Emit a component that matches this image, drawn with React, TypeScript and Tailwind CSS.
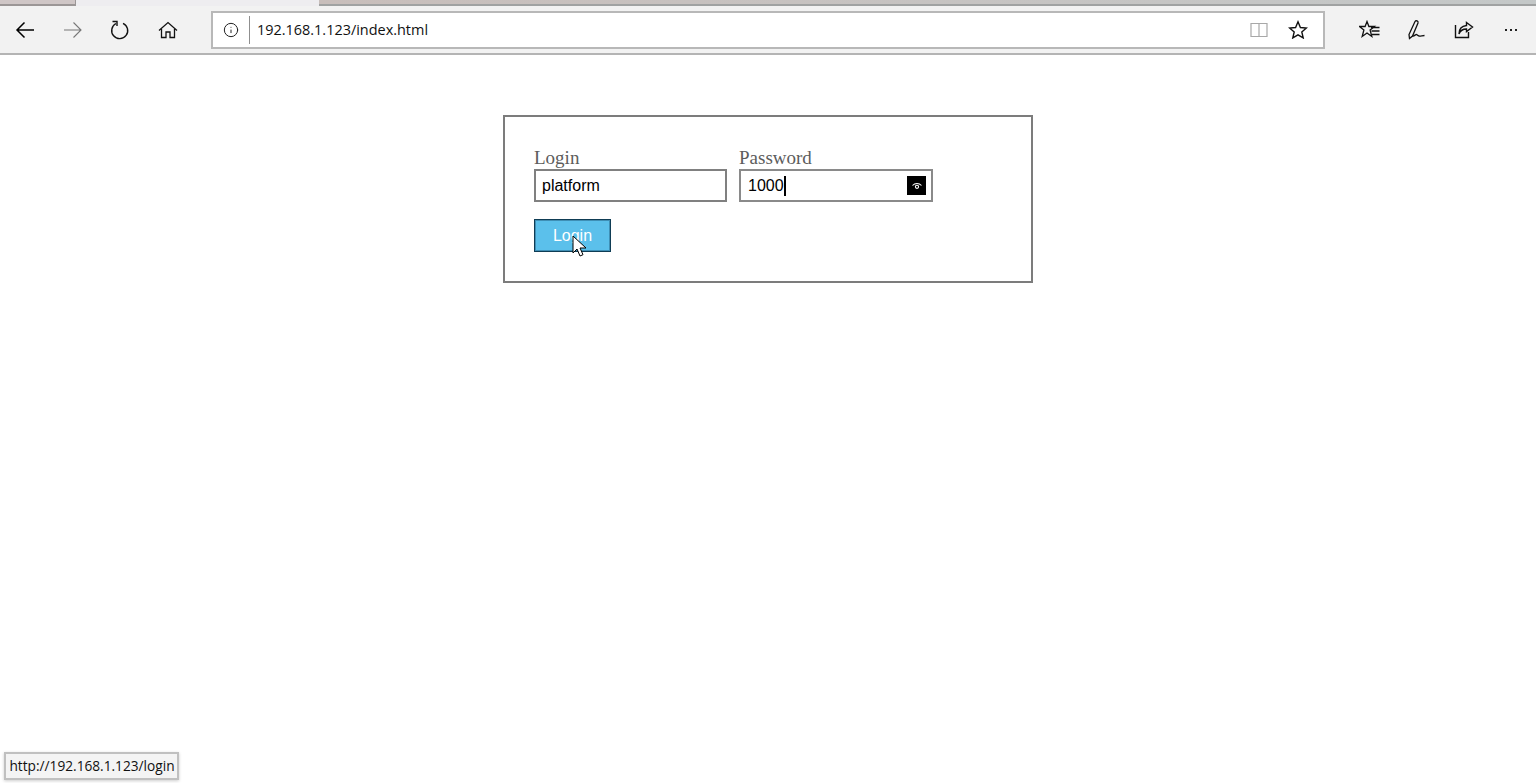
import { Info } from "lucide-react";

function BackIcon({ color }: { color: string }) {
  return (
    <svg width="20" height="18" viewBox="0 0 20 18" fill="none" stroke={color} strokeWidth="1.500">
      <path d="M19 9H2M9.500 1.500L2 9l7.500 7.500" />
    </svg>
  );
}

function ForwardIcon({ color }: { color: string }) {
  return (
    <svg width="20" height="18" viewBox="0 0 20 18" fill="none" stroke={color} strokeWidth="1.100">
      <path d="M1 9h17M10.500 1.500L18 9l-7.500 7.500" />
    </svg>
  );
}

function ReloadIcon() {
  return (
    <svg width="20" height="20" viewBox="0 0 20 20" fill="none" stroke="#111" strokeWidth="1.400">
      <path d="M13 3.300a8 8 0 1 1-7 .2" />
      <path d="M2.500 1.500h4.500v4.500" />
    </svg>
  );
}

function HomeIcon() {
  return (
    <svg width="20" height="18" viewBox="0 0 20 18" fill="none" stroke="#111" strokeWidth="1.300">
      <path d="M1 9.500L10 1.500l9 8" />
      <path d="M3.500 8v8.500h4.500V11h4v5.500h4.500V8" />
    </svg>
  );
}

function BookIcon() {
  return (
    <svg width="18" height="16" viewBox="0 0 18 16" fill="none" stroke="#a8a8a8" strokeWidth="1.200">
      <path d="M1 1.500h16v13H1z" />
      <path d="M9 1.500v13" />
    </svg>
  );
}

function StarIcon() {
  return (
    <svg width="20" height="19" viewBox="0 0 20 19" fill="none" stroke="#111" strokeWidth="1.400">
      <path d="M10 1.800l2.400 5.700 6 .5-4.600 4 1.400 5.900L10 14.800l-5.200 3.100 1.400-5.900-4.600-4 6-.5z" />
    </svg>
  );
}

function FavoritesIcon() {
  return (
    <svg width="21" height="19" viewBox="0 0 21 19" fill="none" stroke="#111" strokeWidth="1.300">
      <path d="M8 1.500l1.900 5h5.600l-4.400 3.500 1.700 6.500L8 13l-4.800 3.500 1.700-6.500L.5 6.500h5.600z" />
      <path d="M12 7.500h8.500M12.500 11h8M13 14.500h7.500" strokeWidth="1.600" />
    </svg>
  );
}

function PenIcon() {
  return (
    <svg width="22" height="22" viewBox="0 0 22 22" fill="none" stroke="#111" strokeWidth="1.300">
      <path d="M9 2.500c1-1.500 3.500-.5 3 1.500L6.500 17 3.500 19.500 3 15.500z" />
      <path d="M6.500 17c1.500.5 2.500-1 3.500-1.500 1-.3 1.500 1.500 3 1.500 1.500.2 3.500-.5 5.500-.5" />
    </svg>
  );
}

function ShareIcon() {
  return (
    <svg width="20" height="18" viewBox="0 0 20 18" fill="none" stroke="#111" strokeWidth="1.400">
      <path d="M1.500 4v12.500h13V11" />
      <path d="M12.500 1.500L18.500 6l-6 4.500V8c-3 0-6 1-7.500 5 0-5 3-8 7.500-8.500z" />
    </svg>
  );
}

function CursorIcon() {
  return (
    <svg width="16" height="24" viewBox="0 0 16 24">
      <path d="M1 1v17l4-4 3 7 3-1.300-3-6.700h6z" fill="#fff" stroke="#000" strokeWidth="1" />
    </svg>
  );
}

function EyeIcon() {
  return (
    <svg width="10" height="8" viewBox="0 0 10 8" fill="none" stroke="#fff" strokeWidth="1.100">
      <path d="M.5 3.500C3 .8 7 .8 9.500 3.500" />
      <circle cx="5" cy="4.800" r="1.600" />
    </svg>
  );
}

export default function App() {
  return (
    <div className="relative h-[783px] w-[1536px] overflow-hidden bg-white font-['Liberation_Sans',sans-serif]">
      <div className="flex h-[6px] w-full bg-[#eeedf0]">
        <div className="w-[76px] border-r border-b-2 border-[#9b9696] bg-[#cfc6c6]" />
        <div className="w-[243px]" />
        <div className="flex-1 border-b-2 border-[#a0a2a2] bg-gradient-to-r from-[#c8bebb] to-[#c4c8c8]" />
      </div>

      <div className="flex h-[49px] items-center border-b-2 border-[#b4b4b4] bg-[#f2f2f2]">
        <div className="flex w-[211px] shrink-0 items-center">
          <div className="flex w-[48px] justify-center pl-[2px]"><BackIcon color="#000" /></div>
          <div className="flex w-[48px] justify-center pl-[2px]"><ForwardIcon color="#777" /></div>
          <div className="flex w-[48px] justify-center"><ReloadIcon /></div>
          <div className="flex w-[48px] justify-center"><HomeIcon /></div>
        </div>
        <div className="flex h-[38px] w-[1114px] shrink-0 items-center border-2 border-[#b8b8b8] bg-white">
          <div className="flex w-[36px] justify-center"><Info size={16} strokeWidth={1.500} color="#222" /></div>
          <div className="h-[28px] w-px bg-[#8f8f8f]" />
          <span className="ml-[7px] pt-[1px] font-['Open_Sans',sans-serif] text-[14.450px] text-[#111]">192.168.1.123/index.html</span>
          <div className="ml-auto flex items-center gap-[20px] pr-[15px]">
            <BookIcon />
            <StarIcon />
          </div>
        </div>
        <div className="flex flex-1 items-center pl-[21px]">
          <div className="flex w-[47px] justify-center"><FavoritesIcon /></div>
          <div className="flex w-[47px] justify-center"><PenIcon /></div>
          <div className="flex w-[47px] justify-center"><ShareIcon /></div>
          <div className="flex w-[47px] justify-center gap-[3px]">
            <span className="h-[2px] w-[2px] bg-[#222]" />
            <span className="h-[2px] w-[2px] bg-[#222]" />
            <span className="h-[2px] w-[2px] bg-[#222]" />
          </div>
        </div>
      </div>

      <div className="mx-auto mt-[60px] h-[168px] w-[530px] border-2 border-[#7c7c7c] px-[29px] pt-[31px]">
        <div className="flex gap-[12px]">
          <div>
            <div className="h-[21px] font-['Liberation_Serif',serif] text-[19px] leading-[20px] text-[#5c5c5c]">Login</div>
            <div className="flex h-[33px] w-[193px] items-center border-2 border-[#808080] pl-[6px] text-[16px] text-black">platform</div>
          </div>
          <div>
            <div className="h-[21px] font-['Liberation_Serif',serif] text-[19px] leading-[20px] text-[#5c5c5c]">Password</div>
            <div className="flex h-[33px] w-[194px] items-center border-2 border-[#8a8a8a] pl-[7px] pr-[5px] text-[16px] text-black">
              <span>1000</span>
              <span className="h-[20px] w-[2px] bg-black" />
              <div className="ml-auto flex h-[19px] w-[19px] items-center justify-center bg-black"><EyeIcon /></div>
            </div>
          </div>
        </div>
        <div className="relative mt-[17px] flex h-[33px] w-[77px] items-center justify-center border border-[#0f3d55] bg-[#5bc0eb] text-[16px] text-white shadow-[inset_0_0_0_1px_#3f8fb5]">
          Login
          <div className="absolute left-[37px] top-[15px]"><CursorIcon /></div>
        </div>
      </div>

      <div className="absolute bottom-[3px] left-[4px] flex h-[28px] w-[175px] items-center justify-center border-2 border-[#c0c0c0] bg-[#f4f4f4] pl-[1px] pt-[1px] font-['Open_Sans',sans-serif] text-[13.700px] text-[#111] shadow-[0_1px_3px_rgba(0,0,0,0.2)]">
        http://192.168.1.123/login
      </div>
    </div>
  );
}
